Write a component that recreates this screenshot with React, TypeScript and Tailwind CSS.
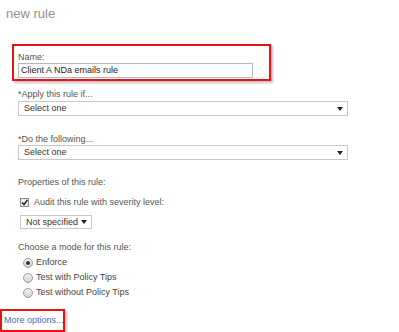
import React from "react";

const font = { fontFamily: '"Liberation Sans", Arial, sans-serif' };

function Select({ label, width }: { label: string; width: string }) {
  return (
    <div className={`flex items-center justify-between h-full border border-[#c8c8c8] bg-white pl-[5px] pr-[4px] ${width}`}>
      <span className="text-[9px] leading-none text-[#333]">{label}</span>
      <svg width="6" height="4" viewBox="0 0 6 4">
        <path d="M0 0 H6 L3 4 Z" fill="#222" />
      </svg>
    </div>
  );
}

function Radio({ label, checked }: { label: string; checked?: boolean }) {
  return (
    <div className="flex items-center gap-[3px] h-[15px]">
      <span className="w-[10px] h-[10px] rounded-full border border-[#9a9a9a] bg-gradient-to-b from-[#f2f2f2] to-[#d6d6d6] flex items-center justify-center">
        {checked && <span className="w-[4px] h-[4px] rounded-full bg-[#333]" />}
      </span>
      <span className="text-[9px] leading-none text-[#444]">{label}</span>
    </div>
  );
}

export default function App() {
  return (
    <div className="w-[399px] h-[332px] bg-white overflow-hidden flex flex-col" style={font}>
      <h1 className="pl-[6px] pt-[5px] h-[23px] text-[13px] leading-[18px] text-[#8f8f8f]">new rule</h1>

      <div className="ml-[12px] mt-[21px] w-[259px] h-[37px] border-2 border-[#ee1111] shadow-[2px_2px_2px_rgba(0,0,0,0.25)] flex flex-col pl-[4px] pt-[5px]">
        <span className="h-[12px] text-[9px] leading-[12px] text-[#555]">Name:</span>
        <div className="w-[235px] h-[15px] border border-[#b9b9b9] flex items-center pl-[2px]">
          <span className="text-[9px] leading-none text-[#222]">Client A NDa emails rule</span>
        </div>
      </div>

      <div className="pl-[18px] flex flex-col">
        <span className="mt-[7px] h-[12px] text-[9px] leading-[12px] text-[#555]">*Apply this rule if...</span>
        <div className="mt-[1px] h-[15px]">
          <Select label="Select one" width="w-[330px]" />
        </div>
        <span className="mt-[17px] h-[12px] text-[9px] leading-[12px] text-[#555]">*Do the following...</span>
        <div className="h-[15px]">
          <Select label="Select one" width="w-[330px]" />
        </div>

        <span className="mt-[16px] h-[12px] text-[9px] leading-[12px] text-[#555]">Properties of this rule:</span>

        <div className="mt-[8px] ml-[2px] h-[12px] flex items-center gap-[5px]">
          <span className="w-[9px] h-[9px] border border-[#888] bg-[#eee] flex items-center justify-center">
            <svg width="7" height="7" viewBox="0 0 7 7">
              <path d="M1 3.5 L3 5.5 L6.5 1" stroke="#222" strokeWidth="1.5" fill="none" />
            </svg>
          </span>
          <span className="text-[9px] leading-[12px] text-[#555]">Audit this rule with severity level:</span>
        </div>
        <div className="mt-[7px] ml-[2px] h-[14px]">
          <Select label="Not specified" width="w-[72px]" />
        </div>

        <span className="mt-[12px] h-[12px] text-[9px] leading-[12px] text-[#555]">Choose a mode for this rule:</span>
        <div className="ml-[5px] mt-[2px] flex flex-col">
          <Radio label="Enforce" checked />
          <Radio label="Test with Policy Tips" />
          <Radio label="Test without Policy Tips" />
        </div>
      </div>

      <div className="mt-[9px] w-[65px] h-[23px] border-2 border-[#ee1111] shadow-[2px_2px_2px_rgba(0,0,0,0.25)] flex items-center pl-[2px]">
        <span className="whitespace-nowrap text-[9px] leading-none text-[#4a6bc5]">More options...</span>
      </div>
    </div>
  );
}
